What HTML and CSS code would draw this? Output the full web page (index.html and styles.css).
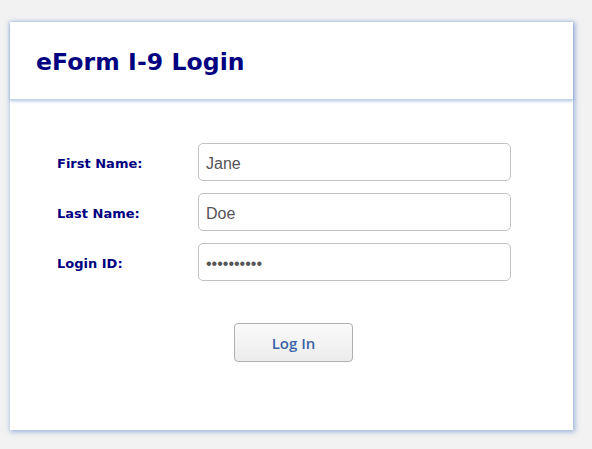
FILE: index.html
```html
<!DOCTYPE html>
<html>
<head>
<meta charset="utf-8">
<link rel="stylesheet" href="styles.css">
</head>
<body>
<div class="page">
  <div class="card">
    <div class="card-header">
      <h1 class="title">eForm I-9 Login</h1>
    </div>
    <div class="card-body">
      <form class="form">
        <div class="row">
          <label class="label">First Name:</label>
          <input class="input" type="text" value="Jane">
        </div>
        <div class="row">
          <label class="label">Last Name:</label>
          <input class="input" type="text" value="Doe">
        </div>
        <div class="row">
          <label class="label">Login ID:</label>
          <input class="input" type="password" value="1234567890">
        </div>
        <div class="actions">
          <button class="btn" type="button">Log In</button>
        </div>
      </form>
    </div>
  </div>
</div>
</body>
</html>
```

FILE: styles.css
```css
html, body {
  margin: 0;
  padding: 0;
  background: #f2f2f2;
}
.page {
  padding: 22px 0 19px 10px;
  min-height: 449px;
  box-sizing: border-box;
}
.card {
  width: 563px;
  height: 408px;
  background: #fff;
  box-shadow: 1px 1px 5px 1px rgba(100, 140, 205, 0.6);
  display: flex;
  flex-direction: column;
}
.card-header {
  height: 78px;
  box-sizing: border-box;
  padding: 3px 0 0 26px;
  display: flex;
  align-items: center;
  box-shadow: 0 1px 3px rgba(100, 140, 205, 0.55);
  border-bottom: 1px solid #c5d5ee;
}
.title {
  margin: 0;
  font-family: "DejaVu Sans", Verdana, sans-serif;
  font-weight: bold;
  font-size: 23.5px;
  color: #000080;
  letter-spacing: 0.1px;
}
.card-body {
  padding: 43px 0 0 47px;
}
.form {
  display: flex;
  flex-direction: column;
  gap: 12px;
}
.row {
  display: flex;
  align-items: center;
  height: 38px;
}
.label {
  width: 141px;
  font-family: "DejaVu Sans", Verdana, sans-serif;
  font-weight: bold;
  font-size: 13px;
  color: #000080;
  padding-top: 2px;
}
.input {
  width: 313px;
  height: 38px;
  box-sizing: border-box;
  border: 1px solid #c2c2c2;
  border-radius: 5px;
  padding: 4px 7px 0;
  font-family: "Liberation Sans", Arial, sans-serif;
  font-size: 16px;
  color: #555;
  background: #fff;
  outline: none;
}
.actions {
  display: flex;
  padding: 30px 0 0 177px;
}
.btn {
  width: 119px;
  height: 39px;
  border: 1px solid #b0b0b0;
  border-radius: 4px;
  background: linear-gradient(#fafafa, #ececec);
  font-family: "Open Sans", sans-serif;
  font-weight: 600;
  font-size: 15px;
  color: #3a62a8;
  cursor: pointer;
}
```
